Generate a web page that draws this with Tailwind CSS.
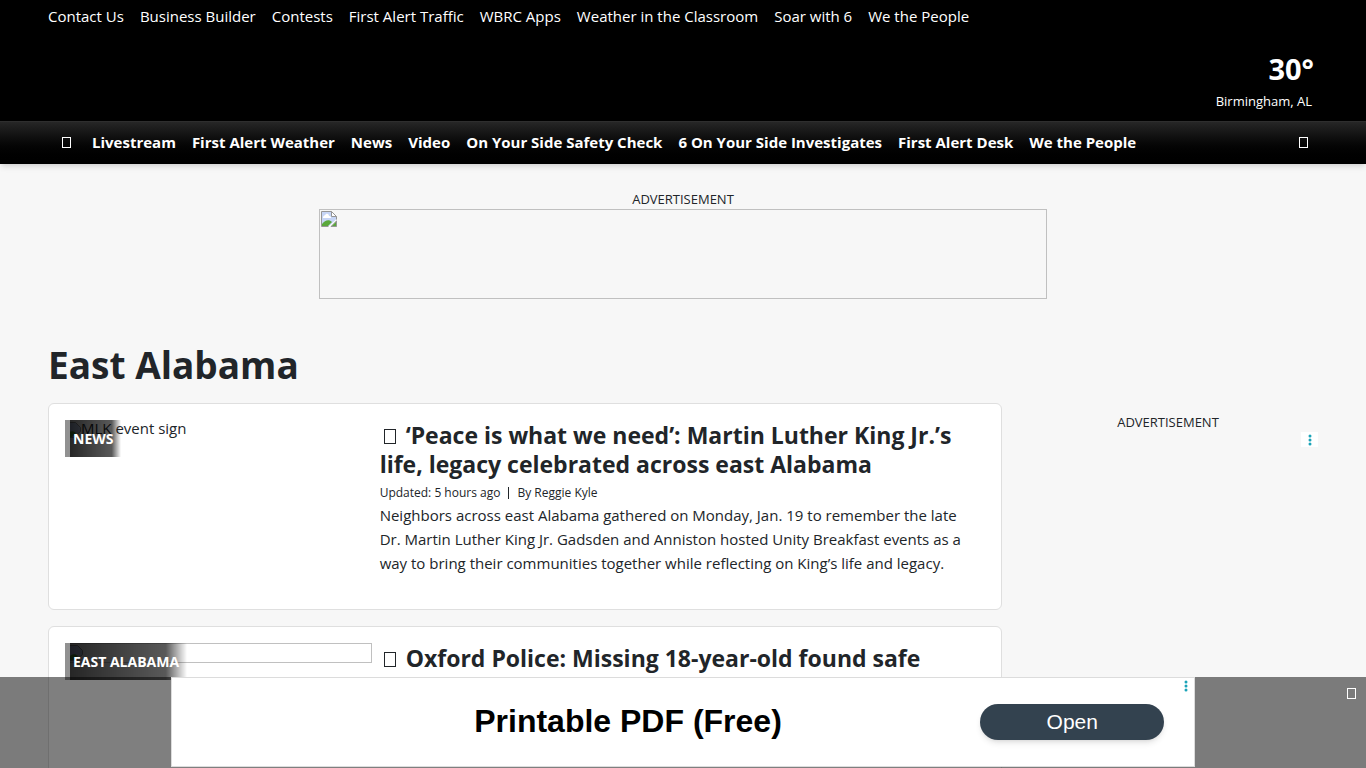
<!DOCTYPE html>
<html lang="en">
<head>
<meta charset="utf-8">
<title>East Alabama</title>
<script src="https://cdn.jsdelivr.net/npm/@tailwindcss/browser@4"></script>
</head>
<body class="h-screen overflow-hidden bg-[#f7f7f7] font-['Open_Sans','Noto_Sans',sans-serif] text-[15px] text-[#212529]">
<header class="text-white">
  <div class="h-[121px] bg-black px-12 pt-1">
    <nav aria-label="Secondary" class="flex gap-4 leading-6 whitespace-nowrap">
      <a href="#">Contact Us</a><a href="#">Business Builder</a><a href="#">Contests</a><a href="#">First Alert Traffic</a><a href="#">WBRC Apps</a><a href="#">Weather in the Classroom</a><a href="#">Soar with 6</a><a href="#">We the People</a>
    </nav>
    <div class="flex flex-col items-end pt-5 pr-1">
      <div class="text-[29px] leading-[42px] font-bold">30°</div>
      <div class="pr-0.5 text-[13px] leading-[22px]">Birmingham, AL</div>
    </div>
  </div>
  <nav aria-label="Main" class="flex h-[43px] items-center gap-4 border-t border-[#2e2e2e] bg-linear-to-b from-[#262626] to-black px-12 pb-0.5 text-[15px] font-bold whitespace-nowrap shadow-md">
    <button aria-label="Menu" class="flex w-7 justify-end pr-[5px]"><span class="block h-[11px] w-[9px] border border-white"></span></button>
    <a href="#">Livestream</a><a href="#">First Alert Weather</a><a href="#">News</a><a href="#">Video</a><a href="#">On Your Side Safety Check</a><a href="#">6 On Your Side Investigates</a><a href="#">First Alert Desk</a><a href="#">We the People</a>
    <button aria-label="Search" class="ml-auto pr-[10px]"><span class="block h-[11px] w-[9px] border border-white"></span></button>
  </nav>
</header>
<main class="px-12">
  <div class="flex flex-col items-center pt-[26px]">
    <div class="text-[13px] leading-[19px]">ADVERTISEMENT</div>
    <div class="h-[90px] w-[728px] border border-[#c0c0c0] p-px">
      <svg class="size-4" viewBox="0 0 16 16" aria-hidden="true">
        <path d="M.5.5h10l5 5v4l-7 6h-8z" fill="#c6d5f6" stroke="#969696"/>
        <path d="M2 7c0-3 2-2 3-4 2-1 3 1 3 2 2 0 2 1 2 2z" fill="#fff"/>
        <path d="M1 15v-2c3-4 7-5 10-2l-4 4z" fill="#5aa83b"/>
        <path d="M10.500.5v5h5z" fill="#fff" stroke="#969696"/>
        <path d="M7 16 15.500 8v2L10 16z" fill="#fff"/>
        <path d="M10 15.500h5.500V10z" fill="#5aa83b" stroke="#969696"/>
      </svg>
    </div>
  </div>
  <h1 class="pt-[38px] text-[37px] leading-[56px] font-bold">East Alabama</h1>
  <div class="flex gap-4 pt-[10px]">
    <div class="flex min-w-0 flex-1 flex-col gap-4">
      <article class="flex min-h-[207px] rounded-md border border-[#dfdfdf] bg-white p-4">
        <div class="relative w-1/3">
          <div class="flex leading-4"><svg class="mt-0.5 size-4" viewBox="0 0 16 16" aria-hidden="true"><path d="M.5.5h10l5 5v4l-7 6h-8z" fill="#c6d5f6" stroke="#969696"/><path d="M1 15v-2c3-4 7-5 10-2l-4 4z" fill="#5aa83b"/></svg>MLK event sign</div>
          <a href="#" class="absolute top-0 left-0 h-[37px] border-l-[5px] border-transparent bg-linear-to-r from-black/85 via-black/65 via-82% to-transparent bg-origin-padding bg-clip-padding pr-2 pl-[3px] text-[14px] leading-[38px] font-bold text-white">NEWS<span class="absolute top-0 -left-[5px] h-full w-[5px] bg-[#919191]"></span></a>
        </div>
        <div class="flex-1 pt-px pl-2">
          <h2 class="text-[23px] leading-[29px] font-bold"><span class="mr-2.5 ml-1 inline-block h-[15px] w-3 border border-[#212529]"></span>‘Peace is what we need’: Martin Luther King Jr.’s<br>life, legacy celebrated across east Alabama</h2>
          <div class="flex items-center gap-2 pt-1 text-[12px] leading-5"><span>Updated: 5 hours ago</span><span class="h-3 w-px bg-[#212529]"></span><span>By Reggie Kyle</span></div>
          <p class="leading-6">Neighbors across east Alabama gathered on Monday, Jan. 19 to remember the late<br>Dr. Martin Luther King Jr. Gadsden and Anniston hosted Unity Breakfast events as a<br>way to bring their communities together while reflecting on King’s life and legacy.</p>
        </div>
      </article>
      <article class="flex min-h-[207px] rounded-md border border-[#dfdfdf] bg-white p-4">
        <div class="relative w-1/3">
          <div class="h-5 border border-[#c0c0c0] p-px"><svg class="size-4" viewBox="0 0 16 16" aria-hidden="true"><path d="M.5.5h10l5 5v4l-7 6h-8z" fill="#c6d5f6" stroke="#969696"/><path d="M1 15v-2c3-4 7-5 10-2l-4 4z" fill="#5aa83b"/></svg></div>
          <a href="#" class="absolute top-0 left-0 h-[37px] border-l-[5px] border-transparent bg-linear-to-r from-black/85 via-black/65 via-82% to-transparent bg-origin-padding bg-clip-padding pr-2 pl-[3px] text-[14px] leading-[38px] font-bold whitespace-nowrap text-white">EAST ALABAMA<span class="absolute top-0 -left-[5px] h-full w-[5px] bg-[#919191]"></span></a>
        </div>
        <div class="flex-1 pt-px pl-2">
          <h2 class="text-[23px] leading-[29px] font-bold"><span class="mr-2.5 ml-1 inline-block h-[15px] w-3 border border-[#212529]"></span>Oxford Police: Missing 18-year-old found safe</h2>
        </div>
      </article>
    </div>
    <aside class="w-[300px] pt-2.5">
      <div class="text-center text-[13px] leading-[19px]">ADVERTISEMENT</div>
      <button aria-label="Ad options" class="ml-auto flex h-[15px] w-[17px] items-center justify-center bg-white">
        <svg class="h-3 w-1" viewBox="0 0 4 12" fill="#1aa3b8"><circle cx="2" cy="2" r="1.500"/><circle cx="2" cy="6" r="1.500"/><circle cx="2" cy="10" r="1.500"/></svg>
      </button>
    </aside>
  </div>
</main>
<div class="fixed inset-x-0 bottom-0 flex h-[91px] justify-center bg-black/50 pb-px">
  <section aria-label="Advertisement" class="relative flex w-3/4 items-center border border-[#dcdcdc] bg-white font-['Liberation_Sans',sans-serif]">
    <h2 class="flex-1 pr-[30px] pb-0.5 pl-[134px] text-center text-[32px] leading-9 font-bold text-black">Printable PDF (Free)</h2>
    <button class="mr-[30px] h-9 w-[184px] rounded-full bg-[#33424f] text-[21px] text-white shadow-md">Open</button>
    <button aria-label="Ad options" class="absolute top-0.5 right-1.5"><svg class="h-3 w-1" viewBox="0 0 4 12" fill="#1aa3b8"><circle cx="2" cy="2" r="1.500"/><circle cx="2" cy="6" r="1.500"/><circle cx="2" cy="10" r="1.500"/></svg></button>
  </section>
  <button aria-label="Close" class="absolute top-[11px] right-[10px]"><span class="block h-[11px] w-[9px] border border-white"></span></button>
</div>
</body>
</html>
